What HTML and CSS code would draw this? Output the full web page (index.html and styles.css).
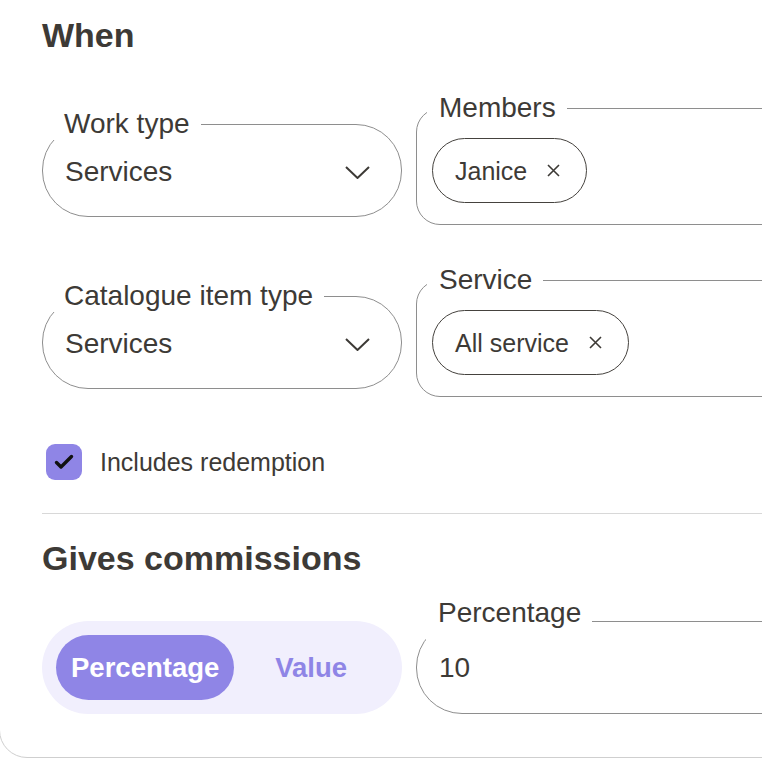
FILE: index.html
```html
<!DOCTYPE html>
<html lang="en">
<head>
<meta charset="utf-8">
<title>Commission rule</title>
<link rel="stylesheet" href="styles.css">
</head>
<body>
<div class="page">
  <div class="card">
    <h2 class="section-title">When</h2>

    <div class="field-row">
      <fieldset class="field field--pill">
        <legend>Work type</legend>
        <div class="field-value">
          <span>Services</span>
          <svg class="chevron" width="25" height="13" viewBox="0 0 25 13" aria-hidden="true"><polyline points="1,1 12.5,12 24,1"/></svg>
        </div>
      </fieldset>
      <fieldset class="field field--chips">
        <legend>Members</legend>
        <div class="chips">
          <span class="chip">Janice
            <svg class="chip-x" width="13" height="13" viewBox="0 0 13 13" aria-hidden="true"><path d="M1 1L12 12M12 1L1 12"/></svg>
          </span>
        </div>
      </fieldset>
    </div>

    <div class="field-row">
      <fieldset class="field field--pill">
        <legend>Catalogue item type</legend>
        <div class="field-value">
          <span>Services</span>
          <svg class="chevron" width="25" height="13" viewBox="0 0 25 13" aria-hidden="true"><polyline points="1,1 12.5,12 24,1"/></svg>
        </div>
      </fieldset>
      <fieldset class="field field--chips">
        <legend>Service</legend>
        <div class="chips">
          <span class="chip">All service
            <svg class="chip-x" width="13" height="13" viewBox="0 0 13 13" aria-hidden="true"><path d="M1 1L12 12M12 1L1 12"/></svg>
          </span>
        </div>
      </fieldset>
    </div>

    <label class="check-row">
      <span class="checkbox">
        <svg width="36" height="36" viewBox="0 0 36 36" aria-hidden="true"><polyline points="10.5,18.5 15,23 25.5,12.5"/></svg>
      </span>
      Includes redemption
    </label>

    <hr class="divider">

    <h2 class="section-title section-title--spaced">Gives commissions</h2>

    <div class="field-row field-row--end">
      <div class="segmented">
        <button class="segment is-active" type="button">Percentage</button>
        <button class="segment" type="button">Value</button>
      </div>
      <fieldset class="field field--input">
        <legend>Percentage</legend>
        <div class="field-value">10</div>
      </fieldset>
    </div>
  </div>
</div>
</body>
</html>
```

FILE: styles.css
```css
* {
  box-sizing: border-box;
}

html,
body {
  margin: 0;
  background: #ffffff;
  overflow: hidden;
}

body {
  font-family: "Liberation Sans", Arial, Helvetica, sans-serif;
  color: #3d3a36;
}

/* Clips the card, which is wider and taller than the window */
.page {
  width: 100%;
  height: 100vh;
  overflow: hidden;
}

.card {
  width: 900px;
  margin: -40px 0 0 -1px;
  padding: 54px 0 43px 42px;
  border: 1px solid #cfcfcf;
  border-radius: 28px;
  background: #ffffff;
}

.section-title {
  margin: 0;
  font-size: 34px;
  line-height: 40px;
  font-weight: 700;
  color: #3d3a36;
}

.section-title--spaced {
  margin-top: 24px;
}

/* Two-column rows of form fields */
.field-row {
  display: grid;
  grid-template-columns: 360px 420px;
  column-gap: 14px;
  align-items: start;
  margin-top: 37px;
}

.field-row + .field-row {
  margin-top: 39px;
}

.field-row--end {
  align-items: end;
  margin-top: 19px;
}

/* Outlined field with a notched label */
.field {
  margin: 0;
  min-width: 0;
  border: 1px solid #8e8e8e;
}

.field legend {
  padding: 0 11px 0 12px;
  font-size: 28px;
  line-height: 32px;
  color: #3d3a36;
}

.field-value {
  display: flex;
  align-items: center;
  justify-content: space-between;
  font-size: 28px;
  line-height: 32px;
  padding-left: 13px;
}

.field--pill {
  margin-top: 16px;
  border-radius: 46px;
  padding: 0 31px 28px 9px;
}

.field--pill .field-value {
  padding-top: 16px;
}

/* Text input: its label sits a little above the outline */
.field--input {
  border-radius: 46px;
  padding: 0 31px 29px 9px;
}

.field--input legend {
  padding-bottom: 16px;
}

.field--input .field-value {
  padding-top: 7px;
}

.chevron {
  fill: none;
  stroke: #3d3a36;
  stroke-width: 2;
}

/* Multi-select field holding chips */
.field--chips {
  border-radius: 24px;
  padding: 0 20px 21px 10px;
}

.chips {
  display: flex;
  gap: 10px;
  padding: 14px 0 0 5px;
}

.chip {
  display: inline-flex;
  align-items: center;
  gap: 20px;
  height: 65px;
  padding: 0 26px 0 22px;
  border: 1px solid #45423e;
  border-radius: 33px;
  font-size: 25px;
  line-height: 30px;
  color: #3d3a36;
}

.chip-x {
  fill: none;
  stroke: #3d3a36;
  stroke-width: 1.6;
}

/* Checkbox row */
.check-row {
  display: flex;
  align-items: center;
  gap: 18px;
  margin-top: 47px;
  padding-left: 4px;
  font-size: 25px;
  line-height: 36px;
  color: #3d3a36;
}

.checkbox {
  display: block;
  width: 36px;
  height: 36px;
  border-radius: 9px;
  background: #8f85e6;
}

.checkbox svg {
  display: block;
  fill: none;
  stroke: #111111;
  stroke-width: 3.4;
  stroke-linecap: round;
  stroke-linejoin: round;
}

.divider {
  margin: 33px 0 0;
  border: 0;
  border-top: 1px solid #d8d8d8;
  height: 0;
}

/* Percentage / Value switch */
.segmented {
  display: grid;
  grid-template-columns: auto 1fr;
  height: 93px;
  padding: 14px;
  border-radius: 47px;
  background: #f1effd;
}

.segment {
  height: 65px;
  padding: 0 15px;
  border: 0;
  border-radius: 33px;
  background: transparent;
  font-family: inherit;
  font-size: 27.5px;
  font-weight: 700;
  color: #8f85e6;
  cursor: pointer;
}

.segment.is-active {
  background: #8f85e6;
  color: #ffffff;
}
```
